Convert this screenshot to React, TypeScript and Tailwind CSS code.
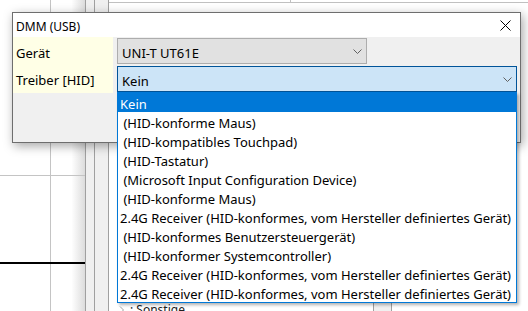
import React from "react";

const items: string[] = [
  "Kein",
  " (HID-konforme Maus)",
  " (HID-kompatibles Touchpad)",
  " (HID-Tastatur)",
  " (Microsoft Input Configuration Device)",
  " (HID-konforme Maus)",
  "2.4G Receiver (HID-konformes, vom Hersteller definiertes Gerät)",
  " (HID-konformes Benutzersteuergerät)",
  " (HID-konformer Systemcontroller)",
  "2.4G Receiver (HID-konformes, vom Hersteller definiertes Gerät)",
  "2.4G Receiver (HID-konformes, vom Hersteller definiertes Gerät)",
];

function Chevron() {
  return (
    <svg width="9" height="5" viewBox="0 0 9 5" className="shrink-0">
      <polyline points="0.5,0.5 4.5,4.5 8.5,0.5" fill="none" stroke="#606060" strokeWidth="1" />
    </svg>
  );
}

export default function App() {
  return (
    <div className="relative w-[528px] h-[311px] overflow-hidden bg-white flex font-['Noto_Sans',sans-serif] text-black">
      {/* left pane */}
      <div className="w-[85px] h-full flex flex-col bg-[linear-gradient(to_right,#ffffff_84%,#dcdcdc)]">
        <div className="h-[176px] border-b border-[#c4c4c4] flex">
          <div className="w-[51px] border-r border-[#c4c4c4]" />
        </div>
        <div className="h-[88px] border-b-2 border-black flex">
          <div className="w-[51px] border-r border-[#c4c4c4]" />
        </div>
        <div className="flex-1 flex">
          <div className="w-[51px] border-r border-[#c4c4c4]" />
        </div>
      </div>
      {/* strips */}
      <div className="w-[9px] h-full border-l border-[#a0a0a0] bg-[#f0f0f0]" />
      <div className="w-[14px] h-full border-l border-[#a0a0a0] bg-[#f0f0f0]" />
      {/* right area */}
      <div className="flex-1 h-full flex flex-col border-l border-[#a0a0a0] bg-white">
        <div className="h-[3px] border-b border-[#c0c0c0] bg-white flex">
          <div className="w-[182px] border-r border-[#c0c0c0]" />
        </div>
        <div className="flex-1 bg-white" />
        <div className="h-[8px] flex bg-white">
          <div className="w-[264px] flex items-start pl-[10px]">
            <svg width="6" height="8" viewBox="0 0 6 8" className="mt-[3px]">
              <polyline points="1,0.5 4.5,4 1,7.5" fill="none" stroke="#a0a0a0" strokeWidth="1" />
            </svg>
            <span className="ml-[5px] text-[12px] leading-[12px] pt-[1px] text-[#202020] whitespace-pre">: Sonstige</span>
          </div>
          <div className="w-[19px] border-x border-[#a0a0a0] bg-[#f0f0f0]" />
        </div>
      </div>

      {/* dialog window */}
      <div className="absolute left-[12px] top-[12px] w-[509px] h-[131px] border border-[#6e6e6e] bg-[#f0f0f0] flex flex-col shadow-[2px_3px_10px_rgba(0,0,0,0.35)]">
        <div className="h-[24px] bg-white flex items-center justify-between pl-[3px] pr-[9px]">
          <span className="text-[12px] leading-none pt-[4px]">DMM (USB)</span>
          <svg width="11" height="11" viewBox="0 0 11 11">
            <path d="M0.5 0.5 L10.5 10.5 M10.5 0.5 L0.5 10.5" stroke="#000" strokeWidth="1" fill="none" />
          </svg>
        </div>
        <div className="flex">
          <div className="w-[100px] h-[56px] bg-[#ffffe6] flex flex-col pl-[3px]">
            <div className="h-[28px] flex items-center pt-[5px] text-[13px]">Gerät</div>
            <div className="h-[28px] flex items-center pt-[4px] text-[13px]">Treiber [HID]</div>
          </div>
          <div className="flex flex-col pl-[4px]">
            <div className="h-[28px] pt-[1px]">
              <div className="w-[250px] h-[26px] bg-[#e1e1e1] border border-[#adadad] flex items-center justify-between pl-[4px] pr-[4px] text-[13px]">
                <span className="pt-[5px]">UNI-T UT61E</span>
                <Chevron />
              </div>
            </div>
            <div className="h-[28px] pt-[1px]">
              <div className="w-[400px] h-[26px] bg-[#cce4f7] border border-[#005499] flex items-center justify-between pl-[4px] pr-[4px] text-[13px]">
                <span className="pt-[5px]">Kein</span>
                <Chevron />
              </div>
            </div>
          </div>
        </div>
      </div>

      {/* dropdown list */}
      <div className="absolute left-[117px] top-[92px] w-[400px] h-[211px] border border-[#0078d7] bg-white flex flex-col shadow-[2px_2px_3px_rgba(0,0,0,0.3)]">
        {items.map((t, i) => (
          <div
            key={i}
            className={
              i === 0
                ? "h-[19px] flex items-center pl-[2px] pt-[4px] bg-[#0078d7] text-white text-[13px] whitespace-pre"
                : "h-[19px] flex items-center pl-[2px] pt-[4px] text-[13px] whitespace-pre"
            }
          >
            {t}
          </div>
        ))}
      </div>
    </div>
  );
}
